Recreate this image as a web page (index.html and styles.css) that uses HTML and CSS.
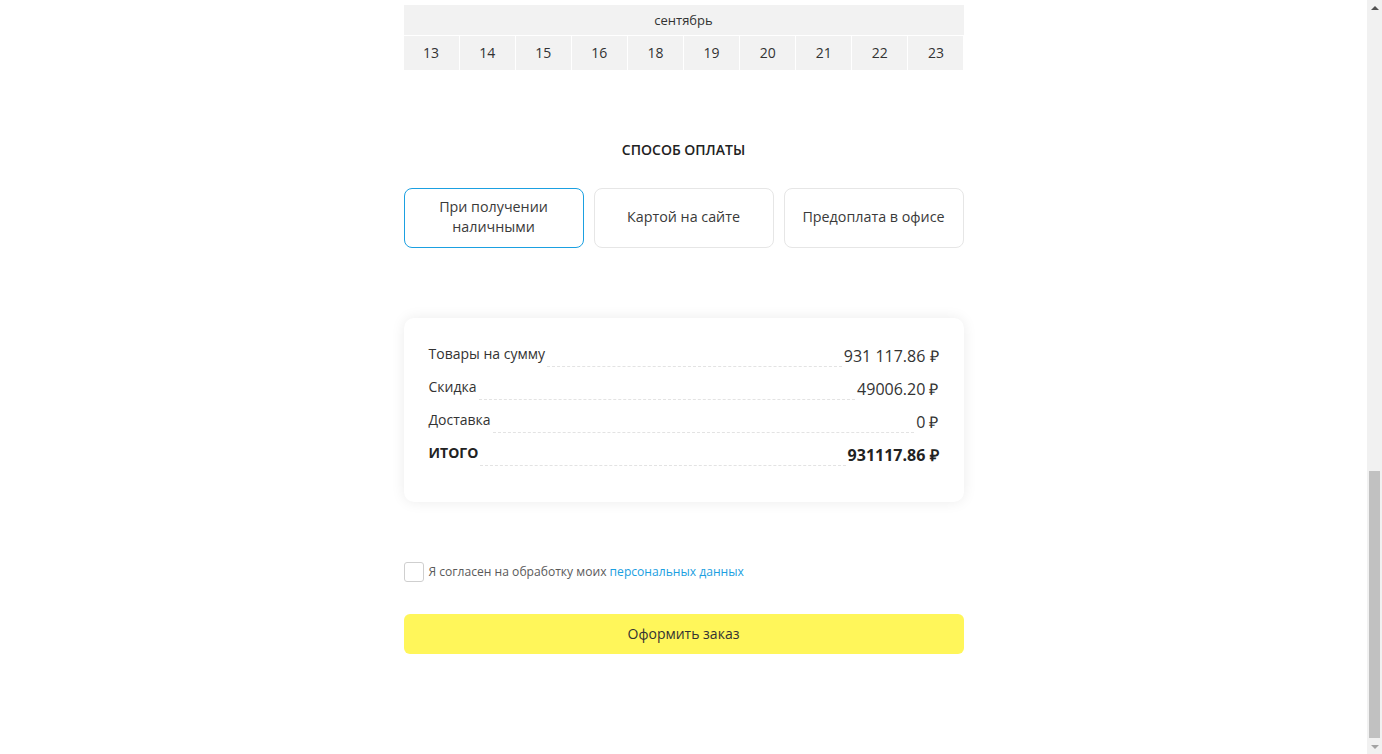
FILE: index.html
```html
<!DOCTYPE html>
<html lang="ru">
<head>
<meta charset="utf-8">
<title>Оформление заказа</title>
<link rel="stylesheet" href="styles.css">
</head>
<body>
<main class="order">
  <section class="calendar">
    <div class="calendar-month">сентябрь</div>
    <div class="calendar-days">
      <div class="day">13</div>
      <div class="day">14</div>
      <div class="day">15</div>
      <div class="day">16</div>
      <div class="day">18</div>
      <div class="day">19</div>
      <div class="day">20</div>
      <div class="day">21</div>
      <div class="day">22</div>
      <div class="day">23</div>
    </div>
  </section>

  <section class="payment">
    <h2 class="section-title">СПОСОБ ОПЛАТЫ</h2>
    <div class="pay-options">
      <div class="pay-option active">При получении<br>наличными</div>
      <div class="pay-option">Картой на сайте</div>
      <div class="pay-option">Предоплата в офисе</div>
    </div>
  </section>

  <section class="summary">
    <div class="sum-row">
      <span class="sum-label">Товары на сумму</span>
      <span class="sum-fill"></span>
      <span class="sum-value">931 117.86 ₽</span>
    </div>
    <div class="sum-row">
      <span class="sum-label">Скидка</span>
      <span class="sum-fill"></span>
      <span class="sum-value">49006.20 ₽</span>
    </div>
    <div class="sum-row">
      <span class="sum-label">Доставка</span>
      <span class="sum-fill"></span>
      <span class="sum-value">0 ₽</span>
    </div>
    <div class="sum-row total">
      <span class="sum-label">ИТОГО</span>
      <span class="sum-fill"></span>
      <span class="sum-value">931117.86 ₽</span>
    </div>
  </section>

  <label class="agree">
    <span class="checkbox"></span>
    <span class="agree-text">Я согласен на обработку моих <a class="agree-link" href="#">персональных данных</a></span>
  </label>

  <button class="submit" type="button">Оформить заказ</button>
</main>

<aside class="scrollbar" aria-hidden="true">
  <span class="scroll-arrow up"></span>
  <span class="scroll-track"><span class="scroll-thumb"></span></span>
  <span class="scroll-arrow down"></span>
</aside>
</body>
</html>
```

FILE: styles.css
```css
html, body {
  height: 100%;
}
body {
  margin: 0;
  padding-right: 15px;
  box-sizing: border-box;
  overflow: hidden;
  background: #fff;
  font-family: "Open Sans", "Liberation Sans", sans-serif;
  color: #333;
}
.order {
  width: 560px;
  margin: 0 auto;
  padding-top: 5px;
  display: flex;
  flex-direction: column;
}
.calendar {
  display: flex;
  flex-direction: column;
  gap: 1px;
  background: #fff;
}
.calendar-month {
  height: 30px;
  background: #f2f2f2;
  font-size: 13px;
  line-height: 30px;
  text-align: center;
  color: #333;
}
.calendar-days {
  display: grid;
  grid-template-columns: repeat(10, 1fr);
  gap: 1px;
}
.day {
  height: 34px;
  background: #f2f2f2;
  font-size: 14px;
  line-height: 34px;
  text-align: center;
  color: #333;
}
.payment {
  margin-top: 70px;
}
.section-title {
  margin: 0;
  font-size: 14px;
  line-height: 20px;
  font-weight: 600;
  text-align: center;
  color: #222;
}
.pay-options {
  margin-top: 28px;
  display: grid;
  grid-template-columns: repeat(3, 1fr);
  gap: 10px;
}
.pay-option {
  height: 60px;
  box-sizing: border-box;
  padding-bottom: 2px;
  border: 1px solid #e6e6e6;
  border-radius: 8px;
  display: flex;
  align-items: center;
  justify-content: center;
  text-align: center;
  font-size: 14.3px;
  line-height: 20px;
  color: #3a3a3a;
}
.pay-option.active {
  border-color: #1ba0e1;
}
.summary {
  margin-top: 70px;
  background: #fff;
  border-radius: 10px;
  box-shadow: 0 0 14px rgba(0, 0, 0, 0.08);
  padding: 25px 25px 36px;
  display: flex;
  flex-direction: column;
  gap: 9px;
}
.sum-row {
  height: 24px;
  display: flex;
  align-items: flex-end;
}
.sum-label {
  font-size: 14px;
  line-height: 20px;
  margin-bottom: 3px;
  color: #333;
  white-space: nowrap;
}
.sum-fill {
  flex: 1;
  height: 0;
  border-bottom: 1px dashed #e3e3e3;
  margin: 0 2px;
}
.sum-value {
  font-size: 16px;
  line-height: 22px;
  color: #333;
  white-space: nowrap;
}
.total .sum-label,
.total .sum-value {
  font-weight: 700;
  color: #222;
}
.agree {
  margin-top: 60px;
  display: flex;
  align-items: center;
  gap: 5px;
  height: 20px;
}
.checkbox {
  width: 20px;
  height: 20px;
  box-sizing: border-box;
  border: 1px solid #cfcfcf;
  border-radius: 3px;
  background: #fff;
}
.agree-text {
  font-size: 12.1px;
  line-height: 18px;
  margin-bottom: 1px;
  color: #5a5a5a;
}
.agree-link {
  color: #1ba0e1;
  text-decoration: none;
}
.submit {
  margin-top: 32px;
  height: 40px;
  padding: 0 0 2px;
  border: 0;
  border-radius: 6px;
  background: #fff65a;
  font-family: "Open Sans", "Liberation Sans", sans-serif;
  font-size: 14px;
  color: #333;
  cursor: pointer;
}

/* decorative browser scrollbar (page is shown scrolled to its end) */
.scrollbar {
  position: fixed;
  top: 0;
  right: 0;
  width: 15px;
  height: 100%;
  background: #f1f1f1;
  display: flex;
  flex-direction: column;
}
.scroll-arrow {
  height: 15px;
  display: flex;
  align-items: center;
  justify-content: center;
}
.scroll-arrow::before {
  content: "";
  width: 0;
  height: 0;
  border-left: 4px solid transparent;
  border-right: 4px solid transparent;
}
.scroll-arrow.up::before {
  border-bottom: 4px solid #505050;
}
.scroll-arrow.down::before {
  border-top: 4px solid #a3a3a3;
}
.scroll-track {
  flex: 1;
  display: flex;
  flex-direction: column;
  justify-content: flex-end;
  padding: 0 2px 1px;
}
.scroll-thumb {
  height: 267px;
  background: #c1c1c1;
}
```
